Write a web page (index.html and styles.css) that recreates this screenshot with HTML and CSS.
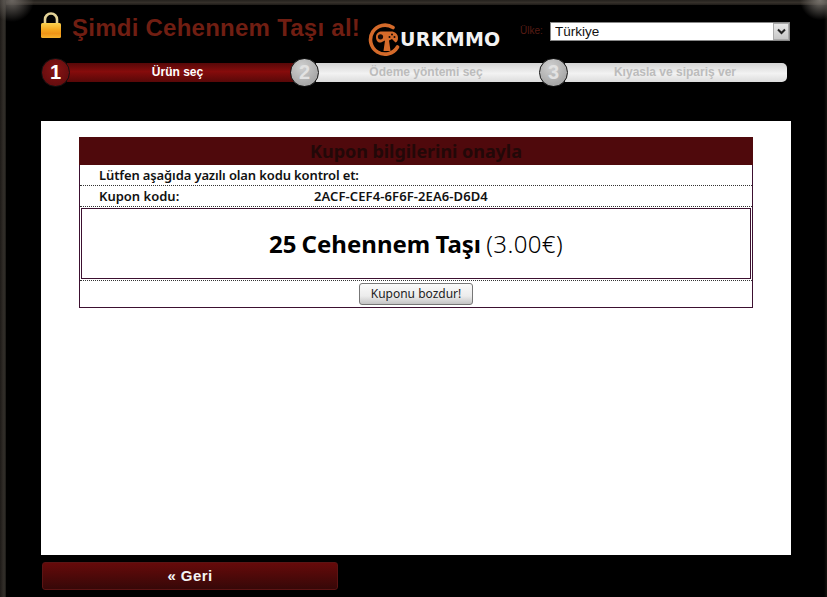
FILE: index.html
```html
<!DOCTYPE html>
<html lang="tr">
<head>
<meta charset="utf-8">
<title>Kupon</title>
<link rel="stylesheet" href="styles.css">
</head>
<body>
<div class="frame">
  <header class="top">
    <svg class="lock" width="22" height="28" viewBox="0 0 22 28" aria-hidden="true">
      <defs>
        <linearGradient id="lockBody" x1="0" y1="0" x2="0" y2="1">
          <stop offset="0" stop-color="#fbd24f"/><stop offset=".45" stop-color="#f5a81f"/><stop offset=".7" stop-color="#ef9417"/><stop offset="1" stop-color="#f5b22c"/>
        </linearGradient>
      </defs>
      <path d="M5 13V8.500a6 6 0 0 1 12 0V13" fill="none" stroke="#e3d296" stroke-width="2.600"/>
      <rect x="1" y="12" width="20" height="15" rx="1.500" fill="url(#lockBody)"/>
    </svg>
    <h1 class="title">Şimdi Cehennem Taşı al!</h1>
    <div class="logo">
      <svg width="33" height="34" viewBox="0 0 33 34" aria-hidden="true">
        <path d="M25 5.500A14.500 14.500 0 1 0 29.500 25" fill="none" stroke="#d46a2a" stroke-width="3.600" stroke-linecap="round"/>
        <path d="M8 15c0-3.500 2.500-5.500 6-5.500h9c4 0 7 2.500 7 6.500 0 2.500-1 4-2.500 4.500L24 17l-3 1.500L22.500 29h-7L17 18.500 13 20.500C10 21 8 18.500 8 15z" fill="#d46a2a"/>
        <circle cx="12.500" cy="14.800" r="2.600" fill="#120806"/>
        <circle cx="24" cy="12.500" r="1" fill="#120806"/>
        <circle cx="26.500" cy="15" r="1" fill="#120806"/>
        <circle cx="21.500" cy="15" r="1" fill="#120806"/>
      </svg>
      <span class="logo-text">URKMMO</span>
    </div>
    <div class="country">
      <label class="country-label" for="country">Ülke:</label>
      <div class="select-wrap">
        <select id="country" class="select"><option>Türkiye</option></select>
        <span class="select-arrow">
          <svg width="9" height="7" viewBox="0 0 9 7" aria-hidden="true"><path d="M1 1.500l3.500 3.500L8 1.500" fill="none" stroke="#222" stroke-width="2"/></svg>
        </span>
      </div>
    </div>
  </header>

  <ol class="steps">
    <li class="step step-active"><span class="num">1</span><span class="bar">Ürün seç</span></li>
    <li class="step"><span class="num">2</span><span class="bar">Ödeme yöntemi seç</span></li>
    <li class="step step-last"><span class="num">3</span><span class="bar">Kıyasla ve sipariş ver</span></li>
  </ol>

  <main class="panel">
    <section class="card">
      <h2 class="card-title">Kupon bilgilerini onayla</h2>
      <div class="row">Lütfen aşağıda yazılı olan kodu kontrol et:</div>
      <div class="row row-code"><span class="code-label">Kupon kodu:</span><span class="code-value">2ACF-CEF4-6F6F-2EA6-D6D4</span></div>
      <div class="product"><strong class="product-name">25 Cehennem Taşı</strong> <span class="product-price">(3.00€)</span></div>
      <div class="actions"><button class="redeem" type="button">Kuponu bozdur!</button></div>
    </section>
  </main>

  <footer class="bottom"><button class="back" type="button">« Geri</button></footer>
</div>
</body>
</html>
```

FILE: styles.css
```css
* { box-sizing: border-box; }
html, body { margin: 0; padding: 0; background: #000; }
body { width: 827px; height: 597px; overflow: hidden; }

.frame {
  width: 827px;
  height: 597px;
  padding: 5px 0 0 6px;
  background:
    radial-gradient(circle at 12px 0, #6a6560 0, rgba(60, 55, 50, 0) 22px) no-repeat,
    radial-gradient(circle at 820px 0, #77726c 0, rgba(60, 55, 50, 0) 20px) no-repeat,
    linear-gradient(90deg, #1d1a17, #2b2723 40%, #33302b 70%, #1a1815) 0 0 / 6px 100% no-repeat,
    linear-gradient(#24211d, #35302a 50%, #1e1b18) 0 0 / 100% 5px no-repeat,
    linear-gradient(90deg, #000, #15130f) 100% 0 / 3px 100% no-repeat,
    #000;
}

.top {
  display: flex;
  align-items: flex-start;
  height: 52px;
  padding: 6px 0 0 34px;
}
.lock { flex: none; margin-right: 10px; }
.title {
  margin: 1px 0 0;
  width: 296px;
  font: bold 24px/32px "Liberation Sans", Arial, sans-serif;
  letter-spacing: .25px;
  color: #701e12;
  white-space: nowrap;
}
.logo { display: flex; align-items: center; width: 152px; margin: 11px 0 0 0; }
.logo svg { flex: none; }
.logo-text {
  margin-left: -1px;
  font: 800 19px/24px "DejaVu Sans", sans-serif;
  letter-spacing: .3px;
  color: #f2f2f2;
}
.country { display: flex; align-items: center; height: 20px; margin-top: 10px; }
.country-label {
  width: 30px;
  font: 10px/14px "Liberation Sans", Arial, sans-serif;
  color: #571c14;
}
.select-wrap { position: relative; width: 240px; height: 19px; }
.select {
  display: block;
  width: 100%;
  height: 100%;
  padding: 0 0 0 4px;
  border: 1px solid #888;
  border-radius: 0;
  appearance: none;
  background: #fff;
  font: 13.500px/17px "Liberation Sans", Arial, sans-serif;
  color: #111;
}
.select-arrow {
  position: absolute;
  top: 1px;
  right: 1px;
  bottom: 1px;
  width: 16px;
  display: flex;
  align-items: center;
  justify-content: center;
  background: linear-gradient(#e8e8e8, #c8c8c8);
  border: 1px solid #aaa;
}

.steps {
  display: flex;
  height: 30px;
  margin: 0;
  padding: 0 0 0 35px;
  list-style: none;
}
.step { display: flex; align-items: center; width: 249px; }
.step-last { width: 248px; }
.num {
  position: relative;
  z-index: 1;
  flex: none;
  width: 29px;
  height: 29px;
  border-radius: 50%;
  border: 1px solid #111;
  display: flex;
  align-items: center;
  justify-content: center;
  background: radial-gradient(circle at 40% 30%, #d0d0d0, #a8a8a8 70%);
  font: bold 20px/1 "Liberation Sans", Arial, sans-serif;
  color: #e2e2e2;
}
.bar {
  flex: 1;
  height: 19px;
  margin-left: -3px;
  margin-right: -12px;
  padding-right: 15px;
  text-align: center;
  font: bold 12px/18px "Liberation Sans", Arial, sans-serif;
  color: #bcbcbc;
  background: linear-gradient(#d4d4d4, #f2f2f2 55%, #dcdcdc);
}
.step-last .bar {
  margin-right: 0;
  padding-right: 2px;
  border-radius: 0 5px 5px 0;
}
.step-active .num {
  background: radial-gradient(circle at 50% 40%, #861414, #5a0a0c);
  color: #fff;
}
.step-active .bar {
  padding-right: 14px;
  background: linear-gradient(#560808, #860c0c 45%, #580808);
  color: #fff;
}

.panel {
  width: 750px;
  height: 434px;
  margin: 34px 0 0 35px;
  padding: 16px 38px 0;
  background: #fff;
}
.card {
  width: 674px;
  height: 171px;
  border: 1px solid #3c1030;
  border-top: 0;
  color: #111;
}
.card-title {
  margin: 0 -1px;
  height: 28px;
  text-align: center;
  background: #4f090c;
  color: #220808;
  font: bold 18px/29px "Noto Sans", sans-serif;
  letter-spacing: -.05px;
}
.row {
  height: 21px;
  padding-left: 19px;
  border-bottom: 1px dotted #333;
  font: 600 13px/20px "Noto Sans", sans-serif;
  letter-spacing: -.13px;
}
.row-code { display: flex; letter-spacing: 0; }
.code-label { width: 215px; }
.code-value { letter-spacing: .1px; }
.product {
  height: 71px;
  margin: 1px 1px 0;
  border: 1px solid #3c1030;
  text-align: center;
  font: 24px/69px "Noto Sans", sans-serif;
  color: #000;
  word-spacing: -1px;
}
.product-name { font-weight: 700; }
.product-price { font-weight: 300; letter-spacing: .4px; }
.actions {
  margin-top: 1px;
  border-top: 1px dotted #333;
  height: 27px;
  padding-top: 2px;
  text-align: center;
}
.redeem {
  width: 114px;
  height: 22px;
  padding: 0;
  border: 1px solid #777;
  border-radius: 3px;
  background: linear-gradient(#fafafa, #ececec 60%, #c4c4c4);
  font: 12px/18px "Noto Sans", sans-serif;
  color: #222;
}

.bottom { padding: 7px 0 0 36px; }
.back {
  display: block;
  width: 296px;
  height: 28px;
  padding: 0;
  border: 1px solid #5c1414;
  border-radius: 3px;
  background: linear-gradient(#660a0a, #360808);
  font: bold 15px/26px "Liberation Sans", Arial, sans-serif;
  letter-spacing: .4px;
  color: #f4f4f4;
}
```
